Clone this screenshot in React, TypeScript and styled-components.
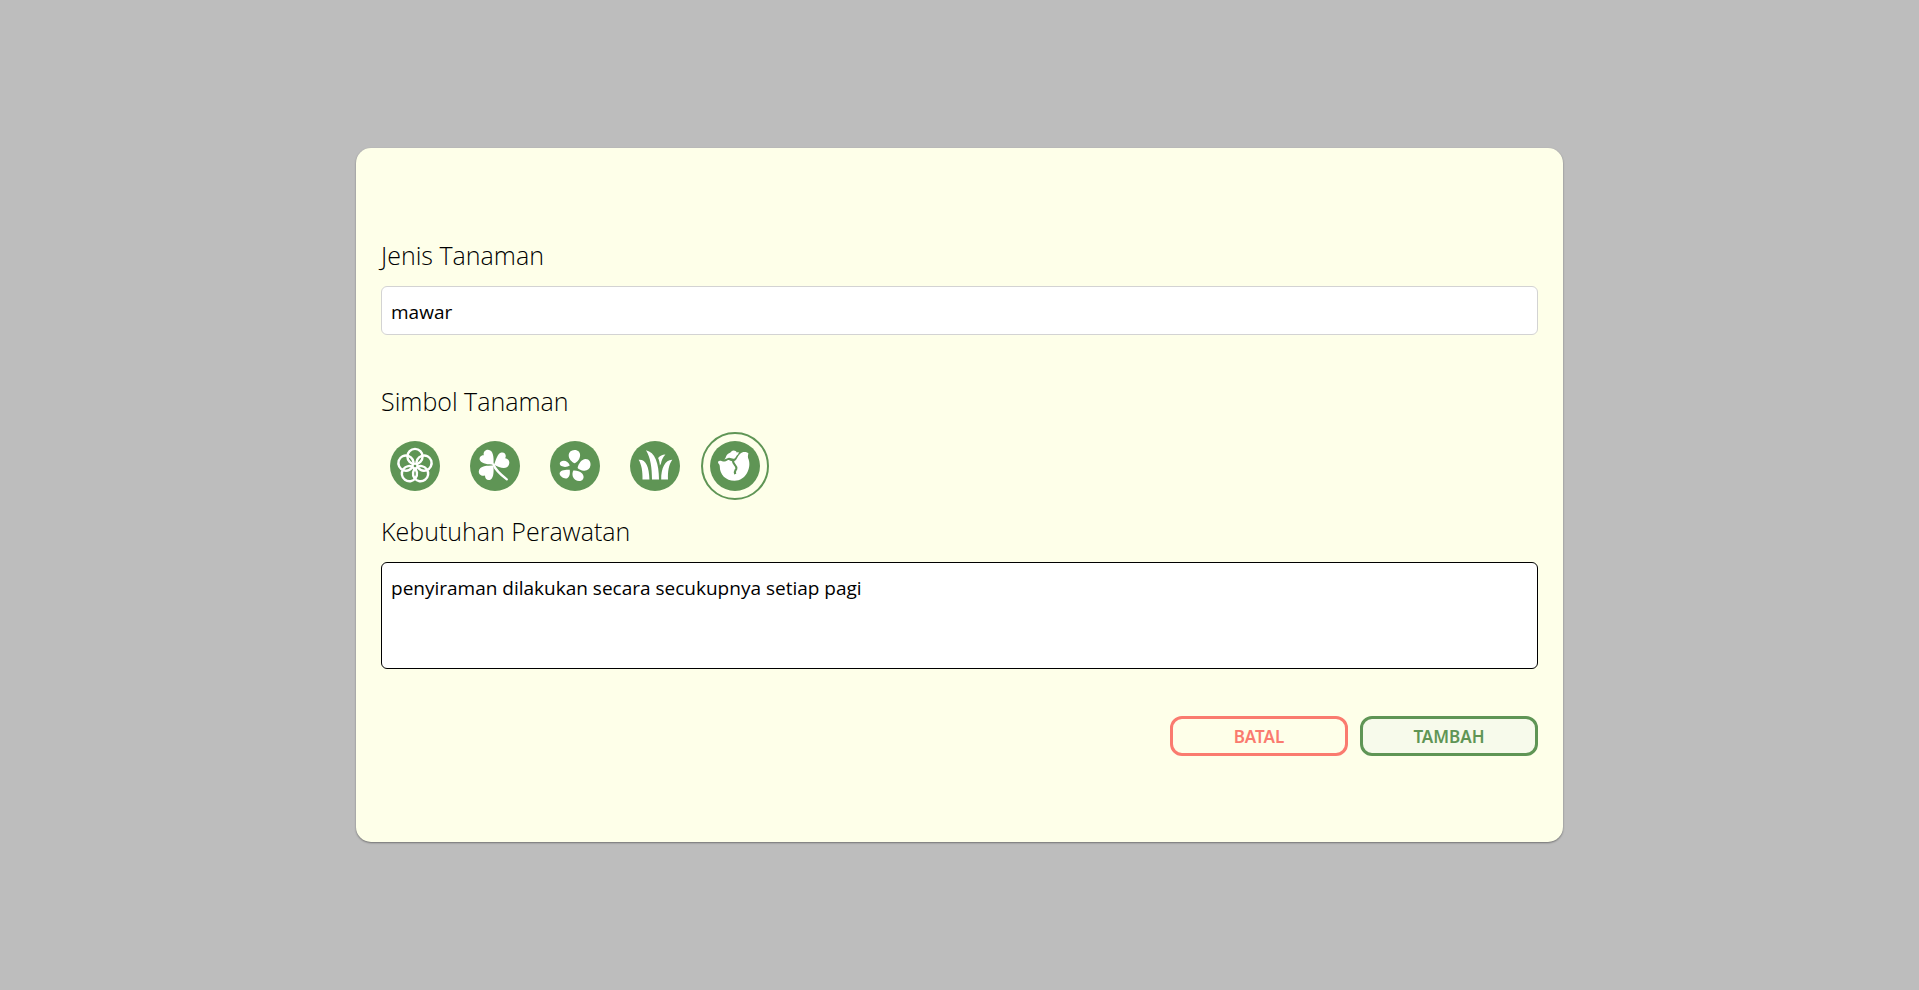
import React, { useState } from "react";
import styled, { createGlobalStyle } from "styled-components";

const GlobalStyle = createGlobalStyle`
  *, *::before, *::after {
    box-sizing: border-box;
  }
  body {
    margin: 0;
    background: #bdbdbd;
    color: #000;
    font-family: "Segoe UI", "Open Sans", "Noto Sans", sans-serif;
  }
`;

const Overlay = styled.main`
  display: flex;
  align-items: center;
  justify-content: center;
  min-height: 100vh;
`;

const Card = styled.form`
  display: flex;
  flex-direction: column;
  width: calc(63% - 2px);
  padding: 88px 25px 86px;
  border-radius: 15px;
  background: #feffe9;
  box-shadow: 0 1px 2px rgba(0, 0, 0, 0.4);
`;

const Field = styled.div`
  display: flex;
  flex-direction: column;
  margin-bottom: 47px;
`;

const Label = styled.label`
  margin-bottom: 12px;
  font-size: 25px;
  font-weight: 300;
  line-height: 38px;
`;

const TextInput = styled.input`
  height: 49px;
  padding: 4px 9px 2px;
  border: 1px solid #d3d3d3;
  border-radius: 6px;
  background: #fff;
  color: #000;
  font: 400 19px/30px "Segoe UI", "Open Sans", "Noto Sans", sans-serif;
  outline: none;
`;

const TextArea = styled.textarea`
  height: 107px;
  padding: 10px 9px;
  border: 1px solid #000;
  border-radius: 6px;
  background: #fff;
  color: #000;
  font: 400 19px/30px "Segoe UI", "Open Sans", "Noto Sans", sans-serif;
  outline: none;
  resize: none;
`;

const SymbolGroup = styled.fieldset`
  min-width: 0;
  margin: 0 0 12px;
  padding: 0;
  border: 0;
`;

const SymbolLegend = styled.legend`
  padding: 0;
  font-size: 25px;
  font-weight: 300;
  line-height: 38px;
`;

const SymbolList = styled.div`
  display: flex;
  gap: 12px;
  margin-top: 12px;
`;

const SymbolOption = styled.label<{ $selected: boolean }>`
  display: flex;
  align-items: center;
  justify-content: center;
  width: 68px;
  height: 68px;
  border: 2px solid ${({ $selected }) => ($selected ? "#5f9555" : "transparent")};
  border-radius: 50%;
  cursor: pointer;
`;

const HiddenRadio = styled.input`
  position: absolute;
  width: 1px;
  height: 1px;
  margin: 0;
  opacity: 0;
`;

const SymbolIcon = styled.svg`
  display: block;
  width: 50px;
  height: 50px;
`;

const Actions = styled.div`
  display: flex;
  justify-content: flex-end;
  gap: 12px;
`;

const ActionButton = styled.button<{ $color: string; $fill: string }>`
  width: 178px;
  height: 40px;
  padding: 2px 0 0;
  border: 3px solid ${({ $color }) => $color};
  border-radius: 12px;
  background: ${({ $fill }) => $fill};
  color: ${({ $color }) => $color};
  font: 600 17px/24px "Segoe UI", "Noto Sans", sans-serif;
  cursor: pointer;
`;

const petals = [0, 72, 144, 216, 288];

const symbols: { id: string; name: string; art: React.ReactNode }[] = [
  {
    id: "bunga",
    name: "Bunga",
    art: (
      <g fill="none" stroke="#fff" strokeWidth="2.4">
        {petals.map((angle) => (
          <circle key={angle} cx="25" cy="15.5" r="7.6" transform={`rotate(${angle} 25 25)`} />
        ))}
        <circle cx="25" cy="25" r="2.5" strokeWidth="1.6" />
        <circle cx="25" cy="25" r="1.3" fill="#5f9555" stroke="none" />
      </g>
    ),
  },
  {
    id: "semanggi",
    name: "Semanggi",
    art: (
      <g fill="#fff">
        <path d="M23.5 23.7C18.5 23.6 12 23 10.1 19.6C8.6 16.8 10.6 14.1 13.8 14.2C13 11.2 15.2 8.7 18 8.8C23.3 9 24 16 23.5 23.7Z" />
        <path d="M24.2 23.7C25.8 19 27.5 12.4 31.4 11.5C35 10.8 36.8 14.3 35.2 17.2C38.5 17.5 40.2 20.5 38.9 23.7C37 29 29.4 26.8 24.2 23.7Z" />
        <path d="M23.4 24.5C23.8 29.2 24 36.4 20.8 38.5C17.6 40.2 14.8 38 15 34.5C11.9 35.6 8.6 33.8 8.8 30.3C9.2 24.5 17.8 24.6 23.4 24.5Z" />
        <path d="M23.5 23.5C25.4 29 30.4 33.5 36.8 38.3" fill="none" stroke="#fff" strokeWidth="2.3" strokeLinecap="round" />
      </g>
    ),
  },
  {
    id: "kelopak",
    name: "Kelopak",
    art: (
      <g fill="#fff">
        <path d="M24.6 22.3C21.5 21.2 18.7 17.8 18.7 14.6C18.7 11.3 21 9.1 24.6 9C28.2 9 30.3 11.4 30.1 14.5C29.9 18 27.5 21.2 24.6 22.3Z" />
        <path d="M27.6 27C28.4 22.8 31.5 18.3 35.5 18C39.1 17.8 41 21.1 40.5 24.3C40 28.2 37.1 30 33.8 29.7C31.4 29.5 28.7 28.6 27.6 27Z" />
        <path d="M19.8 24.6C17.6 26.1 13.6 26.3 11.4 25.1C9.5 24.1 9.2 22 10.7 20.7C13.6 18.3 18.5 20.2 19.8 24.6Z" />
        <path d="M19.7 28.8C20.2 32 19.8 36 17.2 37.2C14.2 38.3 9.5 35.5 9.6 32.3C9.8 29.5 15.1 28.5 19.7 28.8Z" />
        <path d="M23.4 29.5C26 29.1 29.8 30.2 31.9 32.2C34.3 34.6 34.1 38 31.5 39.5C28.2 41.1 23.8 38.9 22.8 35.5C22.2 33.4 22.4 31 23.4 29.5Z" />
      </g>
    ),
  },
  {
    id: "rumput",
    name: "Rumput",
    art: (
      <g fill="#fff">
        <path d="M8.6 18.8C15.5 17.9 19.2 25.5 19.4 38.5H12.5C12.8 30.5 11.5 23.5 8.6 18.8Z" />
        <path d="M16 9.3C25 11.2 29 22.5 29 38.5H22C21.9 27 20.7 17 16 9.3Z" />
        <path d="M42.3 18.7C38.7 23.7 37.7 30.5 38 38.5H31.2C31 27 35.4 18.4 42.3 18.7Z" />
        <path d="M35.4 13.4C32.7 16.4 31.5 19.2 31 22.4L29.9 24.4C29.7 21.5 29 19.1 28.1 17.1C30 14.5 32.7 13.3 35.4 13.4Z" />
      </g>
    ),
  },
  {
    id: "kol",
    name: "Kol",
    art: (
      <g fill="#fff">
        <path d="M14.2 18.6C16.1 17.1 15.4 15.5 17.5 13.2C19 11.9 20.2 12.3 21.3 10.6C23.1 8.8 26 9.7 26.7 11.5L28.8 11L28.2 13.3C26.1 14.6 26.2 16.5 24.2 17.7C21.8 18.2 19.8 15.8 17 17.4L14.2 18.6Z" />
        <path d="M30.2 12.7C32.5 10 36.5 10.8 38.3 12C38.4 14.2 37.3 15.1 38.6 18.2C41.6 27 35.8 39.5 24.7 39.7C15.8 39.8 9.7 33.4 9.8 25.4C9.8 22.9 7.4 22.3 8.2 20.5C9.6 18.7 12 20.4 14.4 20.5C17.1 20.6 17 18.5 19.4 19.2C21.3 20 22.5 20.8 24.4 20.1C27.4 18.6 27.2 15.3 30.2 12.7Z" />
        <path d="M23 19.6C22.8 24 27.2 24.4 26.3 27.6C25.8 29.2 24 29.7 25.2 33.2" fill="none" stroke="#5f9555" strokeWidth="2.2" />
      </g>
    ),
  },
];

export default function App() {
  const [plant, setPlant] = useState("mawar");
  const [symbol, setSymbol] = useState("kol");
  const [care, setCare] = useState("penyiraman dilakukan secara secukupnya setiap pagi");

  return (
    <>
      <GlobalStyle />
      <Overlay>
        <Card onSubmit={(event) => event.preventDefault()}>
          <Field>
            <Label htmlFor="plant">Jenis Tanaman</Label>
            <TextInput id="plant" value={plant} onChange={(event) => setPlant(event.target.value)} />
          </Field>
          <SymbolGroup>
            <SymbolLegend>Simbol Tanaman</SymbolLegend>
            <SymbolList>
              {symbols.map(({ id, name, art }) => (
                <SymbolOption key={id} $selected={id === symbol}>
                  <HiddenRadio
                    type="radio"
                    name="symbol"
                    aria-label={name}
                    checked={id === symbol}
                    onChange={() => setSymbol(id)}
                  />
                  <SymbolIcon viewBox="0 0 50 50" aria-hidden="true">
                    <circle cx="25" cy="25" r="25" fill="#5f9555" />
                    {art}
                  </SymbolIcon>
                </SymbolOption>
              ))}
            </SymbolList>
          </SymbolGroup>
          <Field>
            <Label htmlFor="care">Kebutuhan Perawatan</Label>
            <TextArea id="care" value={care} onChange={(event) => setCare(event.target.value)} />
          </Field>
          <Actions>
            <ActionButton type="button" $color="#fa7b6f" $fill="transparent">
              BATAL
            </ActionButton>
            <ActionButton type="submit" $color="#5f9555" $fill="#f7faeb">
              TAMBAH
            </ActionButton>
          </Actions>
        </Card>
      </Overlay>
    </>
  );
}
